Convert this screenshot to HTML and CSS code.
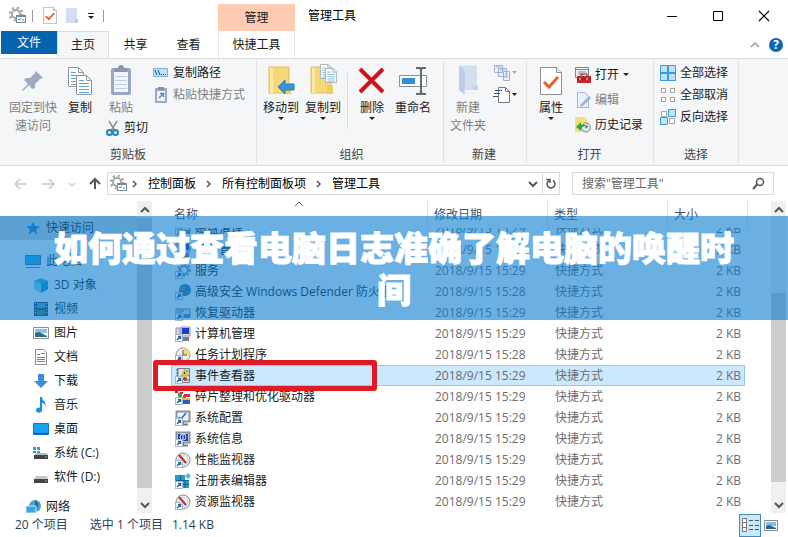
FILE: index.html
```
<!DOCTYPE html>
<html lang="zh-CN">

<head>
    <meta charset="UTF-8">
    <meta name="viewport" content="width=device-width, initial-scale=1.0">
    <title>管理工具</title>
    <link rel="stylesheet" href="styles.css">
</head>

<body>
    <!-- shared icons -->
    <svg class="sprite" aria-hidden="true">
        <symbol id="gear" viewBox="0 0 18 18">
            <circle cx="7" cy="7" r="4" fill="none" stroke="#a3a8ad" stroke-width="2" />
            <circle cx="7" cy="7" r="6" fill="none" stroke="#a3a8ad" stroke-width="3" stroke-dasharray="2 2.7" />
            <rect x="7.500" y="8.500" width="9" height="7" fill="#fff" stroke="#7d8a96" />
            <path d="M7 9.500h10" stroke="#7d8a96" />
            <path d="M9 12l1 1 2-2M13 13h2" fill="none" stroke="#2b8fd6" />
        </symbol>
        <symbol id="check-page" viewBox="0 0 22 28">
            <path d="M.5.5h16l5 5v22H.5z" fill="#fff" stroke="#8c9094" />
            <path d="M16.500.5v5h5" fill="#eee" stroke="#8c9094" />
            <path d="M4 15l5 5 9-10" fill="none" stroke="#dd6530" stroke-width="3" />
        </symbol>
        <symbol id="folder-pale" viewBox="0 0 18 28">
            <path d="M1 1h16v22H1z" fill="#d3dff1" />
            <path d="M1 1l5 4v22l-5-4z" fill="#bccce6" />
            <path d="M13 19h5v4h-5z" fill="#c5d4ec" />
        </symbol>
        <symbol id="page-lines" viewBox="0 0 16 20">
            <path d="M.5.5h10l5 5v14H.5z" fill="#fff" stroke="#8f979e" />
            <path d="M10.500.5v5h5" fill="none" stroke="#8f979e" />
            <path d="M3 5.500h5M3 8.500h10M3 11.500h10M3 14.500h10M3 17.500h10" stroke="#5aa5d8" />
        </symbol>
        <symbol id="folder" viewBox="0 0 26 30">
            <path d="M1 1h20v26H1z" fill="#f5d878" stroke="#e3be54" />
            <path d="M2 1v26h3V3z" fill="#fbe9a8" />
            <path d="M17 19h6v9h-6z" fill="#eecb63" />
        </symbol>
        <symbol id="shortcut" viewBox="0 0 16 16">
            <rect x=".5" y="8.500" width="7" height="7" fill="#fff" stroke="#a9b8c8" />
            <path d="M2 14l3-3M3 10.500h2.500V13" fill="none" stroke="#2566b0" stroke-width="1.500" />
        </symbol>
        <symbol id="monitor" viewBox="0 0 16 16">
            <rect x="1.500" y="1.500" width="13" height="10" fill="#eef3fb" stroke="#8a93a3" stroke-width="2" />
            <path d="M4 14.500h9M8 12v2" stroke="#777e89" stroke-width="2" />
        </symbol>
        <symbol id="i-computer" viewBox="0 0 16 16">
            <path d="M6 1h9v9H6z" fill="#e0e4ec" stroke="#888fa2" />
            <path d="M7 2h7v6H7z" fill="#1b40c8" />
            <path d="M1 2h4v8H1z" fill="#d5d8de" stroke="#8a90a0" />
            <path d="M8 11h6v4H8z" fill="#777e8c" />
            <use href="#shortcut" />
        </symbol>
        <symbol id="i-clock" viewBox="0 0 16 16">
            <circle cx="8" cy="8" r="7" fill="#eee" stroke="#8c8c8c" />
            <path d="M8 8V1a7 7 0 0 1 7 7z" fill="#f6d778" />
            <path d="M8 3v5h4" fill="none" stroke="#555" />
            <use href="#shortcut" />
        </symbol>
        <symbol id="i-event" viewBox="0 0 16 16">
            <path d="M2.500.5h12v14h-12z" fill="#dce4ea" stroke="#6c7a86" />
            <path d="M1 2h3M1 5h3M1 8h3M11 3h3M11 12h3" stroke="#536c8a" />
            <path d="M10 1l4 7H6z" fill="#f4c61d" stroke="#a88410" stroke-width=".5" />
            <path d="M9.500 4v2" stroke="#333" />
            <circle cx="10" cy="11" r="2" fill="#d22c2c" />
            <use href="#shortcut" />
        </symbol>
        <symbol id="i-defrag" viewBox="0 0 16 16">
            <path d="M0 1h3v3H0zM5 3h3v2H5z" fill="#d31c31" />
            <path d="M3 4h4v4H3zM8 6h3v4H8z" fill="#35a943" />
            <path d="M9 5h6v3H9z" fill="#d32b4a" />
            <path d="M8 9h7v2H8z" fill="#e7bb24" />
            <path d="M8 11h7v4H8z" fill="#2b5fc0" />
            <use href="#shortcut" />
        </symbol>
        <symbol id="i-config" viewBox="0 0 16 16">
            <use href="#monitor" />
            <path d="M4 7l2 2 5-6" fill="none" stroke="#2166c7" stroke-width="1.500" />
            <use href="#shortcut" />
        </symbol>
        <symbol id="i-info" viewBox="0 0 16 16">
            <use href="#monitor" />
            <path d="M3 3h10v7H3z" fill="#1c39a8" />
            <circle cx="8" cy="6" r="3" fill="none" stroke="#dce8ff" />
            <path d="M8 4v4" stroke="#fff" />
            <use href="#shortcut" />
        </symbol>
        <symbol id="i-perf" viewBox="0 0 16 16">
            <circle cx="8" cy="8" r="7" fill="#f4f4f4" stroke="#888" />
            <circle cx="8" cy="8" r="5" fill="none" stroke="#cbcbcb" />
            <path d="M4 3l7 8" stroke="#d02323" stroke-width="2" />
            <use href="#shortcut" />
        </symbol>
        <symbol id="i-reg" viewBox="0 0 16 16">
            <path d="M0 2h10v6H0zM6 7h8v8H6z" fill="#20a0cd" />
            <path d="M5.500 2v5M1 7.500h13M10 7v8M6 11.500h8" stroke="#0f6289" />
            <path d="M13 0l3 3-3 3-3-3z" fill="#49bddc" />
            <use href="#shortcut" />
        </symbol>
        <symbol id="i-drive" viewBox="0 0 16 16">
            <path d="M1 4h14v8H1z" fill="#dce3ea" stroke="#6f7f90" />
            <path d="M3 6h6M3 8h4" stroke="#64788c" />
            <path d="M9 9h6v4H9z" fill="#6d8094" />
            <use href="#shortcut" />
        </symbol>
        <symbol id="i-globe" viewBox="0 0 16 16">
            <circle cx="10" cy="6" r="6" fill="#2279ba" />
            <path d="M7 2l4 1-2 4-4-1zM11 7l4 0-3 4z" fill="#45aa58" />
            <path d="M4 6h6v6H4z" fill="#a04860" />
            <use href="#shortcut" />
        </symbol>
        <symbol id="i-service" viewBox="0 0 16 16">
            <circle cx="9" cy="7" r="4" fill="none" stroke="#7896ad" stroke-width="2" />
            <circle cx="9" cy="7" r="6" fill="none" stroke="#7896ad" stroke-width="2" stroke-dasharray="2 2" />
            <use href="#shortcut" />
        </symbol>
    </svg>

    <header class="titlebar">
        <div class="quick-tools">
            <svg width="18" height="18"><use href="#gear" /></svg>
            <span class="bar"></span>
            <svg width="14" height="17"><use href="#check-page" /></svg>
            <svg width="14" height="18" viewBox="0 0 14 18"><path d="M1 1h11v15H1z" fill="#d3dff1" /><path d="M10 12h3v4h-3z" fill="#bccce6" /></svg>
            <svg width="8" height="8" viewBox="0 0 8 8"><path d="M1 1.500h6" stroke="#222" /><path d="M1 4h6L4 7z" fill="#222" /></svg>
            <span class="bar"></span>
        </div>
        <div class="context-tab">管理</div>
        <h1>管理工具</h1>
        <div class="window-buttons">
            <button aria-label="最小化"><svg width="12" height="12"><path d="M1 6.500h10" stroke="#000" /></svg></button>
            <button aria-label="最大化"><svg width="12" height="12"><path d="M1.500 1.500h9v9h-9z" fill="none" stroke="#000" /></svg></button>
            <button aria-label="关闭"><svg width="12" height="12"><path d="M1 1l10 10M11 1L1 11" stroke="#000" stroke-width="1.200" /></svg></button>
        </div>
    </header>

    <nav class="tabs">
        <button class="tab file">文件</button>
        <button class="tab active">主页</button>
        <button class="tab">共享</button>
        <button class="tab">查看</button>
        <button class="tab context">快捷工具</button>
        <span class="spacer"></span>
        <button class="icon-button" aria-label="折叠功能区"><svg width="10" height="8"><path d="M1 6l4-4 4 4" fill="none" stroke="#999" stroke-width="1.500" /></svg></button>
        <button class="help" aria-label="帮助">?</button>
    </nav>

    <section class="ribbon">
        <div class="group clipboard">
            <div class="tools">
                <button class="big off pin">
                    <svg width="32" height="32" viewBox="0 0 32 32"><path d="M19 7l7 7-3 1-5 5 0 4-3 1-3-4-6 6-1-1 6-6-4-4 2-2h4l5-5z" fill="#9eabbf" /></svg>
                    <span>固定到快<br>速访问</span>
                </button>
                <button class="big">
                    <svg width="26" height="32" viewBox="0 0 26 32"><use href="#page-lines" x="1" y="3" width="16" height="20" /><use href="#page-lines" x="9" y="11" width="16" height="20" /></svg>
                    <span>复制</span>
                </button>
                <div class="stack paste">
                    <button class="big off">
                        <svg width="22" height="32" viewBox="0 0 22 32"><rect x="1" y="4" width="20" height="27" rx="2" fill="#98a8c2" /><path d="M4 8h14v20H4z" fill="#eff4fd" /><path d="M5 4h3c0-4 6-4 6 0h3v4H5z" fill="#8796ae" /><path d="M5 12.500h12M5 16.500h12M5 20.500h12M5 24.500h12" stroke="#c2cee2" /></svg>
                        <span>粘贴</span>
                    </button>
                    <button class="small cut">
                        <svg width="14" height="16" viewBox="0 0 14 16"><path d="M3 1l6 10M11 1L5 11" stroke="#8b9199" stroke-width="1.500" /><circle cx="3.500" cy="12.500" r="2.500" fill="none" stroke="#2385bd" stroke-width="2" /><circle cx="9.500" cy="12.500" r="2.500" fill="none" stroke="#2385bd" stroke-width="2" /></svg>
                        剪切
                    </button>
                </div>
                <div class="stack rows">
                    <button class="small">
                        <svg width="16" height="16" viewBox="0 0 16 16"><path d="M.5 3.500h14v8H.5z" fill="#c4e3f8" stroke="#74b3dd" /><path d="M2 5l2 5M5 5l2 5M8 9.500h1M10 9.500h1M12 9.500h1" stroke="#174a72" /></svg>
                        复制路径
                    </button>
                    <button class="small off">
                        <svg width="16" height="16" viewBox="0 0 16 16"><rect x="2" y="1" width="12" height="15" fill="#9babc3" /><path d="M4 4h8v10H4z" fill="#eff4fc" /><path d="M5 0h6v3H5z" fill="#8191a9" /><path d="M6 11l4-4M7 6.500h3.500V10" fill="none" stroke="#6683a9" stroke-width="1.500" /></svg>
                        粘贴快捷方式
                    </button>
                </div>
            </div>
            <h2>剪贴板</h2>
        </div>

        <div class="group organize">
            <div class="tools">
                <button class="big drop">
                    <svg width="32" height="32" viewBox="0 0 32 32"><use href="#folder" x="3" y="2" width="26" height="30" /><path d="M13 23l7-7v4h9v6h-9v4z" fill="#3995d8" stroke="#2a7bb8" /></svg>
                    <span>移动到</span>
                </button>
                <button class="big drop">
                    <svg width="32" height="32" viewBox="0 0 32 32"><use href="#folder" x="3" y="2" width="26" height="30" /><use href="#page-lines" x="13" y="0" width="12" height="15" /><use href="#page-lines" x="18" y="4" width="12" height="15" /></svg>
                    <span>复制到</span>
                </button>
                <span class="divider"></span>
                <button class="big drop">
                    <svg width="32" height="32" viewBox="0 0 32 32"><path d="M4 5l23 23M27 5L4 28" stroke="#d0121b" stroke-width="4" /></svg>
                    <span>删除</span>
                </button>
                <button class="big rename">
                    <svg width="32" height="32" viewBox="0 0 32 32"><path d="M2.500 11.500h27v11h-27z" fill="#fff" stroke="#8a8f94" /><path d="M5 14h13v6H5z" fill="#2f8fd9" /><path d="M19 4h4l1 2 1-2h4M24 5v24M19 30h4l1-2 1 2h4" fill="none" stroke="#636a70" stroke-width="2" /></svg>
                    <span>重命名</span>
                </button>
            </div>
            <h2>组织</h2>
        </div>

        <div class="group create">
            <div class="tools">
                <button class="big off">
                    <svg width="20" height="32" viewBox="0 0 18 28"><use href="#folder-pale" /></svg>
                    <span>新建<br>文件夹</span>
                </button>
                <div class="stack rows">
                    <button class="small off" aria-label="新建项目"><svg width="24" height="18" viewBox="0 0 24 18"><path d="M1.500 1.500h8v7h-8zM5.500 4.500h8v8h-8zM10.500 7.500h6v9h-6z" fill="#eaf0fb" stroke="#9fb2d2" /><path d="M3 3h5M7 6h5M12 10h3M12 13h3" stroke="#9fb2d2" /><path d="M19 7h5l-2.500 3z" fill="#aaa" /></svg></button>
                    <button class="small" aria-label="轻松访问"><svg width="24" height="18" viewBox="0 0 24 18"><path d="M5.500 1.500h7l4 4v11h-11z" fill="#fff" stroke="#777d84" /><path d="M12.500 1.500v4h4" fill="none" stroke="#777d84" /><path d="M2 4.500h7M1 7.500h6M0 10.500h5" stroke="#1c5c91" /><path d="M19 7h5l-2.500 3z" fill="#222" /></svg></button>
                </div>
            </div>
            <h2>新建</h2>
        </div>

        <div class="group open">
            <div class="tools">
                <button class="big drop">
                    <svg width="22" height="32" viewBox="0 0 22 32"><use href="#check-page" y="3" width="22" height="28" /></svg>
                    <span>属性</span>
                </button>
                <div class="stack rows">
                    <button class="small">
                        <svg width="16" height="16" viewBox="0 0 16 16"><path d="M.5.5h13v10H.5z" fill="#eef1f4" stroke="#7e8791" /><path d="M1 2.500h12M3 5h8M3 7h5" stroke="#7e8791" /><path d="M2 9h14v7H2z" fill="#c3262b" /><path d="M6 9V7h6v2M2 12h14" fill="none" stroke="#8e1519" /><path d="M5 11v2M12 11v2" stroke="#fff" /></svg>
                        打开<i class="caret"></i>
                    </button>
                    <button class="small off">
                        <svg width="16" height="16" viewBox="0 0 16 16"><path d="M2.500.5h7l4 4v11h-11z" fill="#eaf2fd" stroke="#9eb6d7" /><path d="M6 12l8-8 2 2-8 8-3 1z" fill="#a0b4cd" /></svg>
                        编辑
                    </button>
                    <button class="small">
                        <svg width="16" height="16" viewBox="0 0 16 16"><path d="M0 0h9l3 2v13H0z" fill="#f7dc7c" /><circle cx="11" cy="10.500" r="4.500" fill="#dce7e5" stroke="#7e8c8c" /><path d="M11 8v3l2-2" fill="none" stroke="#555" /><path d="M1 10l5-5v3c3-1 4 0 5 1-3 0-5 1-5 5z" fill="#31a43c" /></svg>
                        历史记录
                    </button>
                </div>
            </div>
            <h2>打开</h2>
        </div>

        <div class="group select">
            <div class="tools">
                <div class="stack rows">
                    <button class="small">
                        <svg width="16" height="16" viewBox="0 0 16 16"><path d="M.5.5h15v15H.5z" fill="#bde3fa" stroke="#3c9cd7" /><path d="M8 0v16M0 8h16" stroke="#3c9cd7" stroke-width="2" /></svg>
                        全部选择
                    </button>
                    <button class="small">
                        <svg width="16" height="16" viewBox="0 0 16 16"><path d="M1.500 1.500h4v4h-4zM10.500 1.500h4v4h-4zM1.500 10.500h4v4h-4zM10.500 10.500h4v4h-4z" fill="#fff" stroke="#a5a5a5" /></svg>
                        全部取消
                    </button>
                    <button class="small">
                        <svg width="16" height="16" viewBox="0 0 16 16"><path d="M1.500 2.500h5v5h-5zM9.500 9.500h5v5h-5z" fill="#fff" stroke="#a5a5a5" /><path d="M8.500.5h7v7h-7zM.5 8.500h7v7h-7z" fill="#bde3fa" stroke="#3c9cd7" /></svg>
                        反向选择
                    </button>
                </div>
            </div>
            <h2>选择</h2>
        </div>
    </section>

    <div class="address-row">
        <div class="nav-buttons">
            <button aria-label="后退"><svg width="14" height="12"><path d="M13 6H2M6 1L1 6l5 5" fill="none" stroke="#c9c9c9" stroke-width="1.500" /></svg></button>
            <button aria-label="前进"><svg width="14" height="12"><path d="M1 6h11M8 1l5 5-5 5" fill="none" stroke="#c9c9c9" stroke-width="1.500" /></svg></button>
            <button aria-label="最近位置"><svg width="8" height="12"><path d="M1 5l3 3 3-3" fill="none" stroke="#d0d0d0" stroke-width="1.500" /></svg></button>
            <button aria-label="上移"><svg width="12" height="13"><path d="M6 12V2M1 7l5-5 5 5" fill="none" stroke="#555" stroke-width="2" /></svg></button>
        </div>
        <div class="address">
            <svg class="place" width="18" height="18"><use href="#gear" /></svg>
            <svg width="6" height="8"><path d="M1 1l3 3-3 3" fill="none" stroke="#555" stroke-width="1.500" /></svg>
            <a href="#">控制面板</a>
            <svg width="6" height="8"><path d="M1 1l3 3-3 3" fill="none" stroke="#555" stroke-width="1.500" /></svg>
            <a href="#">所有控制面板项</a>
            <svg width="6" height="8"><path d="M1 1l3 3-3 3" fill="none" stroke="#555" stroke-width="1.500" /></svg>
            <a href="#">管理工具</a>
            <span class="spacer"></span>
            <button aria-label="历史"><svg width="10" height="8"><path d="M1 2l4 4 4-4" fill="none" stroke="#555" stroke-width="2" /></svg></button>
            <button class="refresh" aria-label="刷新"><svg width="12" height="12"><path d="M8 2.500a4 4 0 1 1-4 0" fill="none" stroke="#555" stroke-width="1.500" /><path d="M1.500 1.500H5V5" fill="none" stroke="#555" stroke-width="1.500" /></svg></button>
        </div>
        <label class="search">
            <input type="text" placeholder="搜索&quot;管理工具&quot;" aria-label="搜索">
            <svg width="13" height="13"><circle cx="8" cy="5" r="3.500" fill="none" stroke="#555" stroke-width="1.500" /><path d="M5 7.500L1 12" stroke="#555" stroke-width="2" /></svg>
        </label>
    </div>

    <main>
        <nav class="sidebar">
            <a href="#" class="root current"><svg width="16" height="16"><path d="M8 2l2 4 5 .5-4 3 1 5-4-3-4 3 1-5-4-3L6 6z" fill="#1f7fd0" /></svg>快速访问</a>
            <a href="#" class="root pc"><svg width="16" height="16"><path d="M.5 2.500h15v9H.5z" fill="#31a7f0" stroke="#34729c" /><path d="M1 14.500h14" stroke="#6d7a86" /></svg>此电脑</a>
            <a href="#"><svg width="16" height="16"><path d="M1 4l7-3 7 3v8l-7 4-7-4z" fill="#3bb6df" /><path d="M1 4l7 3v9l-7-4z" fill="#8edff2" /><path d="M8 7l7-3v8l-7 4z" fill="#179cc8" /></svg>3D 对象</a>
            <a href="#"><svg width="16" height="16"><path d="M1 1h14v14H1z" fill="#34434e" /><path d="M4 2h8v5H4z" fill="#5fa7d8" /><path d="M4 9h8v5H4z" fill="#4a8b6c" /><path d="M2.500 2v12M13.500 2v12" stroke="#fff" stroke-dasharray="1 2" /></svg>视频</a>
            <a href="#"><svg width="16" height="16"><path d="M.5 2.500h15v11H.5z" fill="#fff" stroke="#8b8f92" /><path d="M2 4h12v4H2z" fill="#86c3e8" /><path d="M2 8l4-1 8 4v1H2z" fill="#356c7c" /></svg>图片</a>
            <a href="#"><svg width="16" height="16"><path d="M2.500.5h8l3 3v12h-11z" fill="#fff" stroke="#8b8f92" /><path d="M4 5.500h3M4 8.500h8M4 10.500h8M4 12.500h8M8 4.500h4" stroke="#3d8ec4" /></svg>文档</a>
            <a href="#"><svg width="16" height="16"><path d="M5 1h6v7h4l-7 7-7-7h4z" fill="#3d8edb" /></svg>下载</a>
            <a href="#"><svg width="16" height="16"><path d="M7 0h2c0 4 5 4 3 10 0-3-1-4-3-4v7c0 4-7 3-6 0 0-2 3-3 4-2z" fill="#1b8de0" /></svg>音乐</a>
            <a href="#"><svg width="16" height="16"><path d="M.5 2.500h15v11H.5z" fill="#18a0fa" stroke="#1476bb" /><path d="M1 12.500h14" stroke="#0d568c" /></svg>桌面</a>
            <a href="#"><svg width="16" height="16"><path d="M0 2h3v3H0zM4 2h3v3H4zM0 6h3v2H0zM4 6h3v2H4z" fill="#20a9d2" /><path d="M3 8h11l1 3H1z" fill="#bbb" /><path d="M1 10h14v4H1z" fill="#444" /><path d="M12 12h2" stroke="#40ed60" /></svg>系统 (C:)</a>
            <a href="#"><svg width="16" height="16"><path d="M3 7h11l1 3H1z" fill="#c7c7c7" /><path d="M1 10h14v4H1z" fill="#444" /><path d="M12 12h2" stroke="#40ed60" /></svg>软件 (D:)</a>
            <a href="#" class="root net"><svg width="16" height="16"><circle cx="10" cy="7" r="6" fill="#4ca2cb" /><path d="M10 1c5 3 4 7 0 11" fill="#266d9b" /><path d="M1 7h10v7H1z" fill="#3ba4e3" stroke="#d0e8f7" /></svg>网络</a>
        </nav>
        <div class="scrollbar tree-scroll">
            <button aria-label="向上"><svg width="10" height="8"><path d="M1 6l4-4 4 4" fill="none" stroke="#555" stroke-width="2" /></svg></button>
            <div class="track"><div class="thumb"></div></div>
            <button aria-label="向下"><svg width="10" height="8"><path d="M1 2l4 4 4-4" fill="none" stroke="#555" stroke-width="2" /></svg></button>
        </div>
        <div class="files">
            <table>
                <thead>
                    <tr>
                        <th class="name"><div>名称<svg class="sort" width="10" height="6"><path d="M1 5l4-4 4 4" fill="none" stroke="#666" /></svg></div></th>
                        <th class="date"><div>修改日期</div></th>
                        <th class="type"><div>类型</div></th>
                        <th class="size"><div>大小</div></th>
                    </tr>
                </thead>
                <tbody>
                    <tr><td><svg><use href="#i-drive" /></svg>磁盘清理</td><td>2018/9/15 15:29</td><td>快捷方式</td><td>2 KB</td></tr>
                    <tr><td><svg><use href="#i-computer" /></svg>打印管理</td><td>2018/9/15 15:29</td><td>快捷方式</td><td>2 KB</td></tr>
                    <tr><td><svg><use href="#i-service" /></svg>服务</td><td>2018/9/15 15:29</td><td>快捷方式</td><td>2 KB</td></tr>
                    <tr><td><svg><use href="#i-globe" /></svg>高级安全 Windows Defender 防火墙</td><td>2018/9/15 15:28</td><td>快捷方式</td><td>2 KB</td></tr>
                    <tr><td><svg><use href="#i-drive" /></svg>恢复驱动器</td><td>2018/9/15 15:29</td><td>快捷方式</td><td>2 KB</td></tr>
                    <tr><td><svg><use href="#i-computer" /></svg>计算机管理</td><td>2018/9/15 15:29</td><td>快捷方式</td><td>2 KB</td></tr>
                    <tr><td><svg><use href="#i-clock" /></svg>任务计划程序</td><td>2018/9/15 15:28</td><td>快捷方式</td><td>2 KB</td></tr>
                    <tr class="selected"><td><svg><use href="#i-event" /></svg>事件查看器<span class="marker"></span></td><td>2018/9/15 15:29</td><td>快捷方式</td><td>2 KB</td></tr>
                    <tr><td><svg><use href="#i-defrag" /></svg>碎片整理和优化驱动器</td><td>2018/9/15 15:29</td><td>快捷方式</td><td>2 KB</td></tr>
                    <tr><td><svg><use href="#i-config" /></svg>系统配置</td><td>2018/9/15 15:29</td><td>快捷方式</td><td>2 KB</td></tr>
                    <tr><td><svg><use href="#i-info" /></svg>系统信息</td><td>2018/9/15 15:29</td><td>快捷方式</td><td>2 KB</td></tr>
                    <tr><td><svg><use href="#i-perf" /></svg>性能监视器</td><td>2018/9/15 15:29</td><td>快捷方式</td><td>2 KB</td></tr>
                    <tr><td><svg><use href="#i-reg" /></svg>注册表编辑器</td><td>2018/9/15 15:29</td><td>快捷方式</td><td>2 KB</td></tr>
                    <tr><td><svg><use href="#i-perf" /></svg>资源监视器</td><td>2018/9/15 15:29</td><td>快捷方式</td><td>2 KB</td></tr>
                </tbody>
            </table>
        </div>
        <div class="scrollbar list-scroll">
            <button aria-label="向上"><svg width="10" height="8"><path d="M1 6l4-4 4 4" fill="none" stroke="#555" stroke-width="2" /></svg></button>
            <div class="track"><div class="thumb"></div></div>
            <button aria-label="向下"><svg width="10" height="8"><path d="M1 2l4 4 4-4" fill="none" stroke="#555" stroke-width="2" /></svg></button>
        </div>
        <div class="banner">如何通过查看电脑日志准确了解电脑的唤醒时间</div>
    </main>

    <footer>
        <span>20 个项目</span>
        <span class="chosen">选中 1 个项目</span>
        <span>1.14 KB</span>
        <span class="spacer"></span>
        <button class="view on" aria-label="详细信息"><svg width="18" height="14"><path d="M1.500.5h4v13h-4zM1 4.500h5M1 9.500h5" fill="#fff" stroke="#777" /><path d="M8 2.500h4M14 2.500h4M8 7.500h4M14 7.500h4M8 11.500h4M14 11.500h4" stroke="#555" /></svg></button>
        <button class="view" aria-label="大图标"><svg width="14" height="11"><path d="M.5.5h13v10H.5z" fill="#fff" stroke="#888" /><path d="M2 2h10v4H2z" fill="#7cc1f0" /><path d="M2 6l3-1 7 3v1H2z" fill="#24639d" /></svg></button>
    </footer>
</body>

</html>
```
FILE: styles.css
```
* {
    box-sizing: border-box;
}

body {
    margin: 0;
    height: 100vh;
    display: flex;
    flex-direction: column;
    background: #fff;
    color: #1a1a1a;
    font-family: "Open Sans", "Noto Sans CJK SC", sans-serif;
    font-size: 12px;
    line-height: 18px;
}

button {
    padding: 0;
    border: none;
    background: none;
    color: inherit;
    font: inherit;
}

a {
    color: inherit;
    text-decoration: none;
}

h1,
h2 {
    margin: 0;
    font-size: 12px;
    font-weight: normal;
}

svg {
    flex: none;
}

.sprite {
    position: absolute;
    width: 0;
    height: 0;
}

.spacer {
    flex: 1;
}

/* title bar */
.titlebar {
    display: flex;
    height: 31px;
    padding-right: 1px;
}

.quick-tools {
    display: flex;
    align-items: center;
    gap: 8px;
    width: 218px;
    padding-left: 9px;
}

.bar {
    width: 1px;
    height: 12px;
    background: #999;
}

.quick-tools .bar:first-of-type {
    margin: 0 2px 0 -3px;
}

.context-tab {
    width: 77px;
    margin-top: 4px;
    line-height: 27px;
    text-align: center;
    background: #ffccb3;
}

.titlebar h1 {
    padding-left: 13px;
    line-height: 31px;
    color: #000;
}

.window-buttons {
    display: flex;
    margin-left: auto;
}

.window-buttons button {
    width: 46px;
    line-height: 0;
}

/* tabs */
.tabs {
    display: flex;
    align-items: center;
    height: 27px;
    padding: 0 5px 0 1px;
}

.tab {
    width: 53px;
    height: 27px;
}

.tab.file {
    width: 56px;
    height: 23px;
    align-self: flex-start;
    background: #0563af;
    color: #fff;
}

.tab.active {
    width: 52px;
    background: #f5f6f7;
    border: 1px solid #dcdddf;
    border-bottom: none;
}

.tab.context {
    width: 77px;
    margin-left: 3px;
    border: 1px solid #e6e6e6;
    border-width: 0 1px;
}

.icon-button {
    margin-right: 9px;
    line-height: 0;
}

.help {
    width: 14px;
    height: 14px;
    border-radius: 50%;
    background: #0b66b8;
    color: #fff;
    font-weight: bold;
    line-height: 14px;
}

/* ribbon */
.ribbon {
    display: flex;
    height: 108px;
    background: #f5f6f7;
    border-top: 1px solid #dcdddf;
    border-bottom: 1px solid #dcdddf;
}

.group {
    display: flex;
    flex-direction: column;
    margin: 2px 0;
    border-right: 1px solid #e0e1e3;
}

.group h2 {
    line-height: 17px;
    text-align: center;
    color: #444;
}

.tools {
    display: flex;
    flex: 1;
}

.clipboard {
    width: 257px;
    padding-left: 5px;
}

.clipboard h2,
.create h2,
.open h2 {
    margin-left: -5px;
}

.organize {
    width: 187px;
    padding-left: 3px;
}

.create {
    width: 83px;
    padding-left: 3px;
}

.open {
    width: 127px;
    padding-left: 4px;
}

.select {
    width: 85px;
}

.big {
    display: flex;
    flex-direction: column;
    align-items: center;
    width: 42px;
    padding-top: 3px;
}

.big span {
    margin-top: 3px;
}

.clipboard .big {
    width: 38px;
}

.clipboard .pin {
    width: 56px;
}

.open .big,
.rename {
    width: 40px;
}

.drop::after {
    content: "";
    border: 3px solid transparent;
    border-top-color: #222;
    border-bottom: none;
}

.off {
    color: #7c7f83;
}

.divider {
    width: 1px;
    height: 56px;
    margin: 12px 3px 0;
    background: #dcdddf;
}

.stack {
    display: flex;
    flex-direction: column;
}

.small {
    display: flex;
    align-items: center;
    gap: 4px;
    height: 22px;
    white-space: nowrap;
}

.rows {
    padding-top: 1px;
}

.paste {
    padding-left: 3px;
}

.cut {
    margin-left: 4px;
}

.clipboard .rows {
    padding-left: 5px;
}

.create .rows {
    padding-left: 4px;
}

.open .small {
    height: 25px;
}

.open .rows {
    padding-left: 4px;
}

.select .rows {
    padding-left: 6px;
}

.caret {
    border: 3px solid transparent;
    border-top-color: #222;
    border-bottom: none;
}

/* address row */
.address-row {
    display: flex;
    align-items: center;
    gap: 12px;
    height: 35px;
    padding: 0 14px;
}

.nav-buttons {
    display: flex;
    align-items: center;
    gap: 13px;
    width: 81px;
}

.nav-buttons button {
    line-height: 0;
}

.address {
    display: flex;
    flex: 1;
    align-items: center;
    gap: 10px;
    height: 23px;
    padding-left: 2px;
    border: 1px solid #d9d9d9;
    color: #000;
}

.address .place {
    margin-right: -6px;
}

.address button {
    line-height: 0;
}

.address .refresh {
    width: 17px;
    height: 21px;
    margin-left: -6px;
    border-left: 1px solid #d9d9d9;
}

.search {
    display: flex;
    align-items: center;
    width: 202px;
    height: 23px;
    padding: 0 8px;
    border: 1px solid #d9d9d9;
}

.search input {
    flex: 1;
    min-width: 0;
    padding: 0 1px;
    border: none;
    outline: none;
    font: inherit;
}

.search input::placeholder {
    color: #666;
}

/* explorer body */
main {
    position: relative;
    display: flex;
    flex: 1;
    min-height: 0;
    padding-right: 2px;
    overflow: hidden;
}

.sidebar {
    width: 137px;
    padding-top: 15px;
    overflow: hidden;
}

.sidebar a {
    display: flex;
    align-items: center;
    gap: 5px;
    height: 24px;
    padding-left: 33px;
}

.sidebar .root {
    padding-left: 25px;
}

.sidebar .current {
    background: #d9d9d9;
}

.sidebar .pc {
    margin-top: 9px;
}

.sidebar .net {
    margin-top: 6px;
}

.scrollbar {
    display: flex;
    flex-direction: column;
    width: 15px;
    background: #f0f0f0;
}

.scrollbar button {
    height: 17px;
    line-height: 0;
}

.track {
    display: flex;
    flex: 1;
    flex-direction: column;
}

.thumb {
    background: #cdcdcd;
}

.tree-scroll .thumb {
    height: 97%;
}

.list-scroll .thumb {
    height: 68%;
    margin-top: auto;
    margin-bottom: 14px;
}

.files {
    flex: 1;
    padding: 0 26px 0 19px;
    overflow: hidden;
}

table {
    width: 100%;
    table-layout: fixed;
    border-collapse: collapse;
}

th {
    position: relative;
    height: 17px;
    padding: 0;
    font-weight: normal;
    text-align: left;
    color: #44546a;
}

/* the header hangs over the first row, which is scrolled half under it */
th div {
    position: absolute;
    z-index: 1;
    inset: 0 0 auto 0;
    height: 27px;
    padding-left: 6px;
    line-height: 27px;
    background: #fff;
    border-right: 1px solid #e2e2e2;
}

th.name div {
    padding-left: 3px;
}

th.size div {
    right: -3px;
}

.sort {
    position: absolute;
    top: 0;
    left: 48%;
}

.date,
.type {
    width: 120px;
}

.size {
    width: 77px;
}

td {
    height: 21px;
    padding: 0 0 0 7px;
    white-space: nowrap;
    color: #6d6d6d;
}

td:first-child {
    position: relative;
    padding-left: 4px;
    color: #1a1a1a;
}

td:last-child {
    padding-right: 4px;
    text-align: right;
}

td svg {
    width: 16px;
    height: 16px;
    margin-right: 4px;
    vertical-align: middle;
}

.selected {
    background: #cce8ff;
    outline: 1px solid #99c9ea;
    outline-offset: -1px;
}

.marker {
    position: absolute;
    top: -5px;
    left: -18px;
    width: 224px;
    height: 31px;
    border: 5px solid #e01b24;
    border-radius: 3px;
}

.banner {
    position: absolute;
    z-index: 2;
    top: 15px;
    left: 0;
    right: 0;
    padding: 10px 40px;
    background: rgba(7, 123, 207, 0.6);
    color: #fff;
    font-family: "Noto Sans CJK SC", sans-serif;
    font-size: 34px;
    font-weight: 900;
    line-height: 42px;
    text-align: center;
    -webkit-text-stroke: 1px #fff;
}

/* status bar */
footer {
    display: flex;
    align-items: center;
    height: 24px;
    padding: 0 7px 0 15px;
    color: #2b3f5c;
}

.chosen {
    margin: 0 9px 0 22px;
}

.view {
    display: flex;
    align-items: center;
    justify-content: center;
    width: 20px;
    height: 23px;
}

.view.on {
    width: 22px;
    background: #cce8f6;
    border: 1px solid #3c8dbc;
}
```
